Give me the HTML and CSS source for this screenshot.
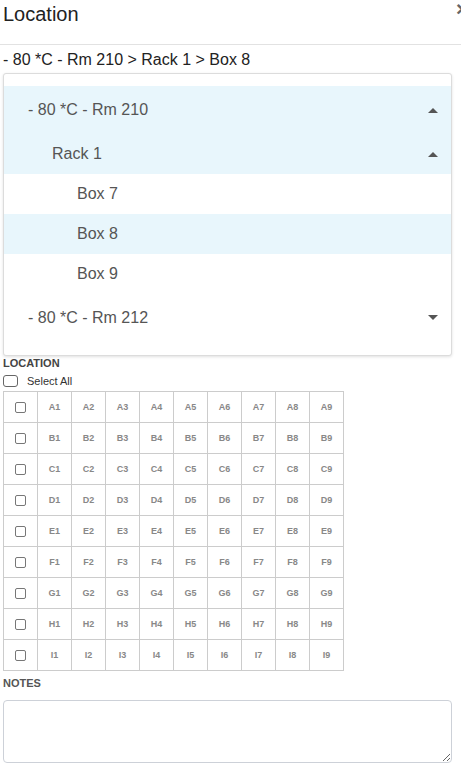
FILE: index.html
```html
<!DOCTYPE html>
<html lang="en">
<head>
<meta charset="utf-8">
<title>Location</title>
<link rel="stylesheet" href="styles.css">
</head>
<body>
<div class="modal">
  <div class="header">
    <h1 class="title">Location</h1>
    <span class="close">×</span>
  </div>
  <div class="crumb">- 80 *C - Rm 210 &gt; Rack 1 &gt; Box 8</div>
  <div class="dropdown">
    <div class="item lvl0 active"><span>- 80 *C - Rm 210</span><i class="caret up"></i></div>
    <div class="item lvl1 active"><span>Rack 1</span><i class="caret up"></i></div>
    <div class="item lvl2"><span>Box 7</span></div>
    <div class="item lvl2 active"><span>Box 8</span></div>
    <div class="item lvl2"><span>Box 9</span></div>
    <div class="item lvl0 last"><span>- 80 *C - Rm 212</span><i class="caret down"></i></div>
  </div>
  <div class="label">LOCATION</div>
  <label class="select-all"><span class="cb big"></span><span>Select All</span></label>
  <div class="grid">
    <div class="cell"><span class="cb"></span></div><div class="cell">A1</div><div class="cell">A2</div><div class="cell">A3</div><div class="cell">A4</div><div class="cell">A5</div><div class="cell">A6</div><div class="cell">A7</div><div class="cell">A8</div><div class="cell">A9</div>
    <div class="cell"><span class="cb"></span></div><div class="cell">B1</div><div class="cell">B2</div><div class="cell">B3</div><div class="cell">B4</div><div class="cell">B5</div><div class="cell">B6</div><div class="cell">B7</div><div class="cell">B8</div><div class="cell">B9</div>
    <div class="cell"><span class="cb"></span></div><div class="cell">C1</div><div class="cell">C2</div><div class="cell">C3</div><div class="cell">C4</div><div class="cell">C5</div><div class="cell">C6</div><div class="cell">C7</div><div class="cell">C8</div><div class="cell">C9</div>
    <div class="cell"><span class="cb"></span></div><div class="cell">D1</div><div class="cell">D2</div><div class="cell">D3</div><div class="cell">D4</div><div class="cell">D5</div><div class="cell">D6</div><div class="cell">D7</div><div class="cell">D8</div><div class="cell">D9</div>
    <div class="cell"><span class="cb"></span></div><div class="cell">E1</div><div class="cell">E2</div><div class="cell">E3</div><div class="cell">E4</div><div class="cell">E5</div><div class="cell">E6</div><div class="cell">E7</div><div class="cell">E8</div><div class="cell">E9</div>
    <div class="cell"><span class="cb"></span></div><div class="cell">F1</div><div class="cell">F2</div><div class="cell">F3</div><div class="cell">F4</div><div class="cell">F5</div><div class="cell">F6</div><div class="cell">F7</div><div class="cell">F8</div><div class="cell">F9</div>
    <div class="cell"><span class="cb"></span></div><div class="cell">G1</div><div class="cell">G2</div><div class="cell">G3</div><div class="cell">G4</div><div class="cell">G5</div><div class="cell">G6</div><div class="cell">G7</div><div class="cell">G8</div><div class="cell">G9</div>
    <div class="cell"><span class="cb"></span></div><div class="cell">H1</div><div class="cell">H2</div><div class="cell">H3</div><div class="cell">H4</div><div class="cell">H5</div><div class="cell">H6</div><div class="cell">H7</div><div class="cell">H8</div><div class="cell">H9</div>
    <div class="cell"><span class="cb"></span></div><div class="cell">I1</div><div class="cell">I2</div><div class="cell">I3</div><div class="cell">I4</div><div class="cell">I5</div><div class="cell">I6</div><div class="cell">I7</div><div class="cell">I8</div><div class="cell">I9</div>
  </div>
  <div class="label notes-label">NOTES</div>
  <textarea class="notes"></textarea>
</div>
</body>
</html>
```

FILE: styles.css
```css
html, body {
  margin: 0;
  padding: 0;
  overflow: hidden;
  background: #fff;
}
body {
  font-family: "Liberation Sans", Arial, sans-serif;
  color: #222;
}
.modal {
  display: flex;
  flex-direction: column;
}
.header {
  display: flex;
  justify-content: space-between;
  align-items: flex-start;
  height: 44px;
  border-bottom: 1px solid #e2e2e2;
  padding-left: 3px;
}
.title {
  margin: 0;
  padding-top: 2px;
  font-size: 20px;
  line-height: 24px;
  font-weight: normal;
  color: #222;
}
.close {
  font-size: 21px;
  font-weight: bold;
  line-height: 18px;
  color: #666;
  margin-right: -7px;
  width: 12px;
}
.crumb {
  padding: 5px 0 0 3px;
  font-size: 16px;
  line-height: 20px;
  color: #222;
}
.dropdown {
  margin: 3px 9px 0 3px;
  border: 1px solid #dcdcdc;
  border-radius: 3px;
  box-shadow: 0 1px 3px rgba(0, 0, 0, 0.12);
  padding: 12px 0 14px;
  background: #fff;
}
.item {
  display: flex;
  align-items: center;
  justify-content: space-between;
  height: 40px;
  font-size: 16px;
  color: #555;
  padding-right: 13px;
}
.item.active {
  background: #e8f6fc;
}
.lvl0 { height: 48px; padding-left: 24px; }
.lvl0.last { height: 47px; }
.lvl1 { padding-left: 48px; }
.lvl2 { padding-left: 73px; }
.caret {
  width: 0;
  height: 0;
  border-left: 5px solid transparent;
  border-right: 5px solid transparent;
}
.caret.up { border-bottom: 5px solid #555; }
.caret.down { border-top: 5px solid #555; }
.label {
  margin: 1px 0 0 3px;
  font-size: 11px;
  line-height: 13px;
  font-weight: bold;
  color: #444;
}
.select-all {
  display: flex;
  align-items: center;
  gap: 9px;
  height: 18px;
  margin: 2px 0 0 3px;
  font-size: 11px;
  color: #333;
}
.cb {
  display: block;
  box-sizing: border-box;
  width: 11px;
  height: 11px;
  border: 1px solid #777;
  border-radius: 2px;
  background: #fff;
}
.cb.big {
  width: 15px;
  height: 12px;
  border: 1.5px solid #666;
  border-radius: 3px;
}
.grid {
  display: grid;
  grid-template-columns: repeat(10, 34px);
  grid-auto-rows: 31px;
  width: 341px;
  box-sizing: border-box;
  margin: 1px 0 0 3px;
  border-left: 1px solid #ccc;
  border-top: 1px solid #ccc;
}
.cell {
  display: flex;
  align-items: center;
  justify-content: center;
  box-sizing: border-box;
  border-right: 1px solid #ccc;
  border-bottom: 1px solid #ccc;
  font-size: 9px;
  font-weight: bold;
  color: #888;
}
.notes-label {
  margin-top: 6px;
  color: #555;
}
.notes {
  margin: 10px 9px 0 3px;
  height: 63px;
  box-sizing: border-box;
  border: 1px solid #cdd1d8;
  border-radius: 4px;
  font-family: inherit;
  padding: 6px;
}
```
